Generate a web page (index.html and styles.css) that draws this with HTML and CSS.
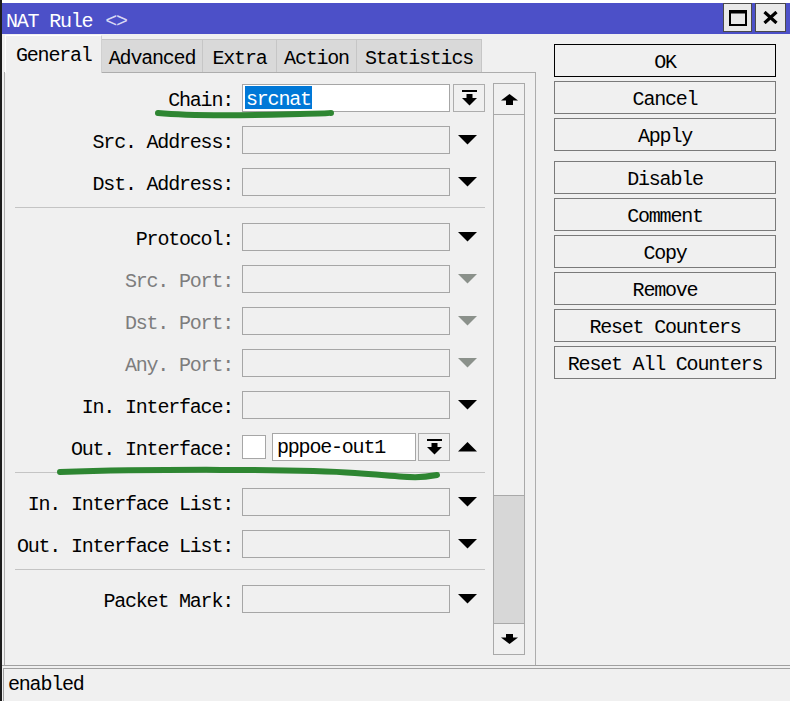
FILE: index.html
```html
<!DOCTYPE html>
<html>
<head>
<meta charset="utf-8">
<link rel="stylesheet" href="styles.css">
</head>
<body>
<div class="window">
  <div class="topstrip"></div>
  <div class="titlebar">
    <div class="title">NAT Rule <span class="diamond">&lt;&gt;</span></div>
    <div class="tbtns">
      <div class="tbtn tbtn-max">
        <svg width="18" height="16" viewBox="0 0 18 16"><rect x="1" y="1.5" width="16" height="13.5" fill="none" stroke="#000" stroke-width="2"/><rect x="0" y="0" width="18" height="3.5" fill="#000"/></svg>
      </div>
      <div class="tbtn tbtn-close">
        <svg width="15" height="13" viewBox="0 0 15 13"><path d="M1.5 1 L13.5 12 M13.5 1 L1.5 12" stroke="#000" stroke-width="3.2" fill="none"/></svg>
      </div>
    </div>
  </div>
  <div class="main">
    <div class="left">
      <div class="tabs">
        <div class="tab tab-general active">General</div>
        <div class="tab tab-advanced">Advanced</div>
        <div class="tab tab-extra">Extra</div>
        <div class="tab tab-action">Action</div>
        <div class="tab tab-stats">Statistics</div>
      </div>
      <div class="panel">
        <div class="form">
          <div class="section">
            <div class="row">
              <div class="label">Chain:</div>
              <div class="field field-white"><span class="sel">srcnat</span></div>
              <div class="dbtn">
                <svg width="15" height="16" viewBox="0 0 15 16"><rect x="0" y="0" width="15" height="2"/><rect x="4.5" y="4" width="6" height="4.5"/><polygon points="0,8 15,8 7.5,15.5"/></svg>
              </div>
            </div>
            <div class="row">
              <div class="label">Src. Address:</div>
              <div class="field"></div>
              <div class="ctrl"><svg class="tri" width="19" height="10" viewBox="0 0 19 10"><polygon points="0,0 19,0 9.5,9.5"/></svg></div>
            </div>
            <div class="row">
              <div class="label">Dst. Address:</div>
              <div class="field"></div>
              <div class="ctrl"><svg class="tri" width="19" height="10" viewBox="0 0 19 10"><polygon points="0,0 19,0 9.5,9.5"/></svg></div>
            </div>
          </div>
          <div class="sep"></div>
          <div class="section">
            <div class="row">
              <div class="label">Protocol:</div>
              <div class="field"></div>
              <div class="ctrl"><svg class="tri" width="19" height="10" viewBox="0 0 19 10"><polygon points="0,0 19,0 9.5,9.5"/></svg></div>
            </div>
            <div class="row disabled">
              <div class="label">Src. Port:</div>
              <div class="field"></div>
              <div class="ctrl"><svg class="tri" width="19" height="10" viewBox="0 0 19 10"><polygon points="0,0 19,0 9.5,9.5"/></svg></div>
            </div>
            <div class="row disabled">
              <div class="label">Dst. Port:</div>
              <div class="field"></div>
              <div class="ctrl"><svg class="tri" width="19" height="10" viewBox="0 0 19 10"><polygon points="0,0 19,0 9.5,9.5"/></svg></div>
            </div>
            <div class="row disabled">
              <div class="label">Any. Port:</div>
              <div class="field"></div>
              <div class="ctrl"><svg class="tri" width="19" height="10" viewBox="0 0 19 10"><polygon points="0,0 19,0 9.5,9.5"/></svg></div>
            </div>
            <div class="row">
              <div class="label">In. Interface:</div>
              <div class="field"></div>
              <div class="ctrl"><svg class="tri" width="19" height="10" viewBox="0 0 19 10"><polygon points="0,0 19,0 9.5,9.5"/></svg></div>
            </div>
            <div class="row">
              <div class="label">Out. Interface:</div>
              <div class="check"></div>
              <div class="field field-white field-short">pppoe-out1</div>
              <div class="dbtn dbtn-small">
                <svg width="15" height="16" viewBox="0 0 15 16"><rect x="0" y="0" width="15" height="2"/><rect x="4.5" y="4" width="6" height="4.5"/><polygon points="0,8 15,8 7.5,15.5"/></svg>
              </div>
              <div class="ctrl"><svg class="tri" width="19" height="10" viewBox="0 0 19 10"><polygon points="0,9.5 19,9.5 9.5,0"/></svg></div>
            </div>
          </div>
          <div class="sep"></div>
          <div class="section">
            <div class="row">
              <div class="label">In. Interface List:</div>
              <div class="field"></div>
              <div class="ctrl"><svg class="tri" width="19" height="10" viewBox="0 0 19 10"><polygon points="0,0 19,0 9.5,9.5"/></svg></div>
            </div>
            <div class="row">
              <div class="label">Out. Interface List:</div>
              <div class="field"></div>
              <div class="ctrl"><svg class="tri" width="19" height="10" viewBox="0 0 19 10"><polygon points="0,0 19,0 9.5,9.5"/></svg></div>
            </div>
          </div>
          <div class="sep"></div>
          <div class="section">
            <div class="row">
              <div class="label">Packet Mark:</div>
              <div class="field"></div>
              <div class="ctrl"><svg class="tri" width="19" height="10" viewBox="0 0 19 10"><polygon points="0,0 19,0 9.5,9.5"/></svg></div>
            </div>
          </div>
        </div>
        <div class="scrollbar">
          <div class="sb-btn sb-up">
            <svg width="17" height="11" viewBox="0 0 17 11"><polygon points="8.5,0 17,6.5 0,6.5"/><rect x="5" y="6" width="7" height="5"/></svg>
          </div>
          <div class="sb-thumb"></div>
          <div class="sb-track"></div>
          <div class="sb-btn sb-down">
            <svg width="17" height="10" viewBox="0 0 17 10"><rect x="5" y="0" width="7" height="4"/><polygon points="0,3.5 17,3.5 8.5,10"/></svg>
          </div>
        </div>
      </div>
    </div>
    <div class="actions">
      <div class="btn btn-default">OK</div>
      <div class="btn">Cancel</div>
      <div class="btn btn-group-end">Apply</div>
      <div class="btn">Disable</div>
      <div class="btn">Comment</div>
      <div class="btn">Copy</div>
      <div class="btn">Remove</div>
      <div class="btn">Reset Counters</div>
      <div class="btn">Reset All Counters</div>
    </div>
  </div>
  <div class="status">enabled</div>
  <svg class="marks" width="790" height="701" viewBox="0 0 790 701">
    <path d="M158 113 C 200 117, 260 115, 300 114 S 325 113, 331 113" />
    <path d="M60 472 C 150 469, 300 469, 355 473 S 415 479, 437 475" />
  </svg>
</div>
</body>
</html>
```
FILE: styles.css
```css
html, body {
  margin: 0;
  padding: 0;
}
body {
  width: 790px;
  height: 701px;
  overflow: hidden;
  background: #f0f0f0;
  font-family: "Liberation Mono", "DejaVu Sans Mono", monospace;
  font-size: 20px;
  letter-spacing: -1.2px;
  color: #000;
}
.window {
  position: relative;
  height: 701px;
  border-left: 2px solid #1c1c1c;
  box-sizing: border-box;
}
.topstrip {
  height: 3px;
  background: #ffffff;
}
.titlebar {
  height: 31px;
  background: #4c50c8;
  display: flex;
  justify-content: space-between;
  align-items: flex-start;
}
.title {
  color: #ffffff;
  padding-left: 4px;
  padding-top: 4px;
  line-height: 30px;
  height: 27px;
  white-space: pre;
}
.diamond {
  color: #d8d8f4;
  margin-left: 2px;
}
.tbtns {
  display: flex;
  gap: 3px;
  padding-right: 4px;
}
.tbtn {
  height: 29px;
  box-sizing: border-box;
  background: #e9e9e9;
  border: 1px solid #4a4a4a;
  display: flex;
  align-items: center;
  justify-content: center;
}
.tbtn-max { width: 29px; }
.tbtn-close { width: 31px; }

.main {
  display: flex;
  padding-top: 1px;
  height: 632px;
  box-sizing: border-box;
  border-bottom: 1px solid #a0a0a0;
}
.left {
  margin-left: 2px;
  width: 532px;
  display: flex;
  flex-direction: column;
}
.tabs {
  display: flex;
  align-items: flex-end;
  height: 37px;
  padding-left: 1px;
}
.tab {
  height: 33px;
  box-sizing: border-box;
  background: #d9d9d9;
  border: 1px solid #c6c6c6;
  border-bottom: none;
  border-left: none;
  text-align: center;
  padding-top: 3px;
  line-height: 31px;
  white-space: pre;
}
.tab.active {
  height: 38px;
  background: #f0f0f0;
  border: 1px solid #ffffff;
  border-right-color: #d0d0d0;
  border-bottom: none;
  margin-bottom: -1px;
  position: relative;
  z-index: 1;
  padding-top: 3px;
  line-height: 34px;
  text-align: left;
  padding-left: 10px;
}
.tab-general { width: 97px; }
.tab-advanced { width: 101px; }
.tab-extra { width: 74px; }
.tab-action { width: 80px; }
.tab-stats { width: 125px; }

.panel {
  flex: 1;
  border: 1px solid #adadad;
  border-bottom: none;
  box-sizing: border-box;
  display: flex;
  padding: 10px 11px 0 10px;
  overflow: hidden;
}
.form {
  width: 470px;
  padding-top: 1px;
}
.row {
  display: flex;
  align-items: flex-start;
  height: 28px;
  margin-bottom: 14px;
}
.section .row:last-child {
  margin-bottom: 0;
}
.label {
  width: 218px;
  margin-right: 9px;
  text-align: right;
  white-space: pre;
  padding-top: 3px;
  line-height: 28px;
}
.row.disabled .label {
  color: #7d7d7d;
}
.row.disabled .tri {
  fill: #8b918b;
}
.field {
  width: 208px;
  height: 28px;
  box-sizing: border-box;
  border: 1px solid #a6a6a6;
  background: #f0f0f0;
  line-height: 27px;
  padding-left: 2px;
  white-space: pre;
}
.field-white {
  background: #ffffff;
}
.field-short {
  width: 144px;
  margin-left: 6px;
  padding-left: 4px;
}
.sel {
  display: block;
  width: 67px;
  height: 23px;
  box-sizing: border-box;
  background: #0078d7;
  color: #ffffff;
  margin-top: 1px;
  padding: 4px 0 0 1px;
  line-height: 20px;
}
.check {
  width: 24px;
  height: 24px;
  margin-top: 2px;
  box-sizing: border-box;
  border: 1px solid #a6a6a6;
  background: #ffffff;
}
.dbtn {
  width: 32px;
  height: 28px;
  margin-left: 3px;
  box-sizing: border-box;
  border: 1px solid #adadad;
  background: #f0f0f0;
  display: flex;
  align-items: center;
  justify-content: center;
}
.dbtn-small {
  margin-left: 2px;
}
.ctrl {
  width: 35px;
  height: 28px;
  display: flex;
  align-items: center;
  justify-content: center;
}
.tri {
  fill: #000;
}
.sep {
  height: 1px;
  background: #c4c4c4;
  margin: 11px 0 15px 0;
}

.scrollbar {
  width: 32px;
  height: 572px;
  margin-left: 8px;
  box-sizing: border-box;
  border: 1px solid #a9a9a9;
  background: #d7d7d7;
  display: flex;
  flex-direction: column;
  flex-shrink: 0;
}
.sb-btn {
  height: 31px;
  box-sizing: border-box;
  background: #f0f0f0;
  display: flex;
  align-items: center;
  justify-content: center;
}
.sb-up {
  border-bottom: 1px solid #a9a9a9;
}
.sb-down {
  border-top: 1px solid #a9a9a9;
}
.sb-thumb {
  height: 381px;
  box-sizing: border-box;
  background: #f0f0f0;
  border-bottom: 1px solid #a9a9a9;
}
.sb-track {
  flex: 1;
}

.actions {
  margin-left: 18px;
  padding-top: 9px;
  width: 222px;
  display: flex;
  flex-direction: column;
  gap: 4px;
}
.btn {
  height: 33px;
  box-sizing: border-box;
  border: 1px solid #7a7a7a;
  background: #f0f0f0;
  text-align: center;
  line-height: 35px;
  white-space: pre;
}
.btn-default {
  border: 1px solid #000;
}
.btn-group-end {
  margin-bottom: 6px;
}

.status {
  margin-top: 2px;
  margin-left: 1px;
  height: 33px;
  box-sizing: border-box;
  border-top: 1px solid #a0a0a0;
  border-left: 1px solid #a0a0a0;
  padding-left: 4px;
  line-height: 32px;
}

.marks {
  position: absolute;
  left: -2px;
  top: 0;
  pointer-events: none;
}
.marks path {
  fill: none;
  stroke: #2e8632;
  stroke-width: 6;
  stroke-linecap: round;
  stroke-linejoin: round;
}
```
